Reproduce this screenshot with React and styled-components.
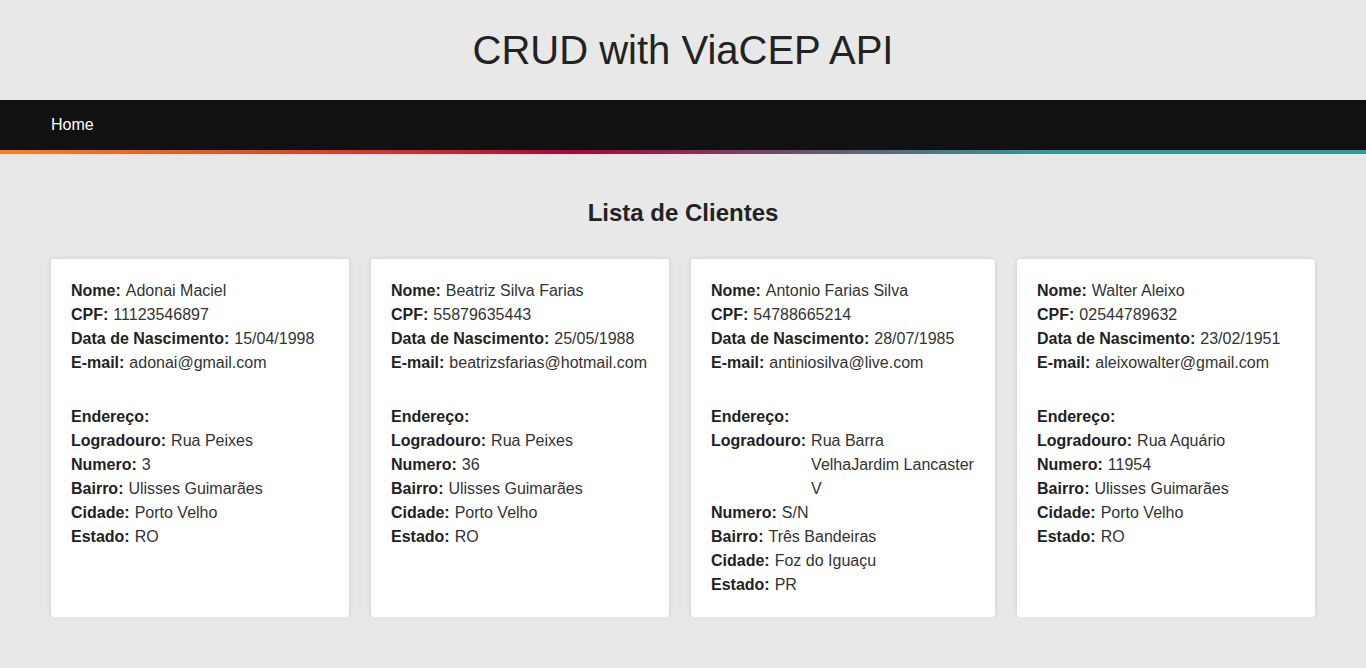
import React from "react";
import styled, { createGlobalStyle } from "styled-components";

const GlobalStyle = createGlobalStyle`
  body {
    margin: 0;
    background: #e8e8e8;
    font-family: "Liberation Sans", Arial, sans-serif;
    color: #222;
  }
`;

const clientes = [
  {
    nome: "Adonai Maciel",
    cpf: "11123546897",
    nascimento: "15/04/1998",
    email: "adonai@gmail.com",
    logradouro: "Rua Peixes",
    numero: "3",
    bairro: "Ulisses Guimarães",
    cidade: "Porto Velho",
    estado: "RO",
    width: 298,
  },
  {
    nome: "Beatriz Silva Farias",
    cpf: "55879635443",
    nascimento: "25/05/1988",
    email: "beatrizsfarias@hotmail.com",
    logradouro: "Rua Peixes",
    numero: "36",
    bairro: "Ulisses Guimarães",
    cidade: "Porto Velho",
    estado: "RO",
    width: 298,
  },
  {
    nome: "Antonio Farias Silva",
    cpf: "54788665214",
    nascimento: "28/07/1985",
    email: "antiniosilva@live.com",
    logradouro: "Rua Barra VelhaJardim Lancaster V",
    numero: "S/N",
    bairro: "Três Bandeiras",
    cidade: "Foz do Iguaçu",
    estado: "PR",
    width: 304,
  },
  {
    nome: "Walter Aleixo",
    cpf: "02544789632",
    nascimento: "23/02/1951",
    email: "aleixowalter@gmail.com",
    logradouro: "Rua Aquário",
    numero: "11954",
    bairro: "Ulisses Guimarães",
    cidade: "Porto Velho",
    estado: "RO",
    width: 298,
  },
];

export default function App() {
  return (
    <>
      <GlobalStyle />
      <Header>
        <Title>CRUD with ViaCEP API</Title>
      </Header>
      <Nav>
        <NavLink href="#">Home</NavLink>
      </Nav>
      <Main>
        <SectionTitle>Lista de Clientes</SectionTitle>
        <CardList>
          {clientes.map((c) => (
            <Card key={c.cpf} $width={c.width}>
              <Field label="Nome:" value={c.nome} />
              <Field label="CPF:" value={c.cpf} />
              <Field label="Data de Nascimento:" value={c.nascimento} />
              <Field label="E-mail:" value={c.email} />
              <Address>
                <Field label="Endereço:" />
                <Field label="Logradouro:" value={c.logradouro} />
                <Field label="Numero:" value={c.numero} />
                <Field label="Bairro:" value={c.bairro} />
                <Field label="Cidade:" value={c.cidade} />
                <Field label="Estado:" value={c.estado} />
              </Address>
            </Card>
          ))}
        </CardList>
      </Main>
    </>
  );
}

const Field = ({ label, value }) => (
  <Row>
    <Label>{label}</Label>
    {value && <Value>{value}</Value>}
  </Row>
);

const Header = styled.header`
  height: 100px;
  display: flex;
  align-items: center;
  justify-content: center;
`;

const Title = styled.h1`
  margin: 0;
  font-size: 40px;
  font-weight: 400;
  color: #222;
`;

const Nav = styled.nav`
  height: 50px;
  background: #111;
  display: flex;
  align-items: center;
  padding: 0 51px;
  border-bottom: 4px solid transparent;
  border-image: linear-gradient(
      to right,
      #ff7f1f 0%,
      #d2302c 30%,
      #b0033a 42%,
      #5e6178 62%,
      #339999 77%,
      #339999 100%
    )
    1;
`;

const NavLink = styled.a`
  color: #fff;
  text-decoration: none;
  font-size: 16px;
`;

const Main = styled.main`
  padding-top: 45px;
`;

const SectionTitle = styled.h2`
  margin: 0 0 32px;
  text-align: center;
  font-size: 24px;
  font-weight: 700;
  line-height: 28px;
`;

const CardList = styled.div`
  display: flex;
  justify-content: center;
  gap: 22px;
  align-items: stretch;
`;

const Card = styled.div`
  width: ${(p) => p.$width}px;
  box-sizing: border-box;
  background: #fff;
  border-radius: 3px;
  box-shadow: 0 0 5px rgba(0, 0, 0, 0.12);
  padding: 20px 20px 20px;
  font-size: 16px;
  line-height: 24px;
`;

const Address = styled.div`
  margin-top: 30px;
`;

const Row = styled.div`
  display: flex;
  gap: 5px;
`;

const Label = styled.span`
  font-weight: 700;
  white-space: nowrap;
`;

const Value = styled.span`
  color: #333;
`;
